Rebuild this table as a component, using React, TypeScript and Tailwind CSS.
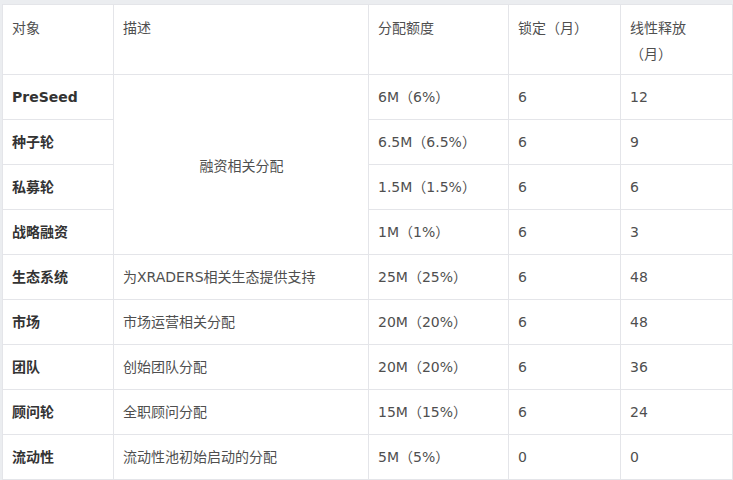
const rows = [
  { name: "PreSeed", amount: "6M（6%）", lock: "6", release: "12" },
  { name: "种子轮", amount: "6.5M（6.5%）", lock: "6", release: "9" },
  { name: "私募轮", amount: "1.5M（1.5%）", lock: "6", release: "6" },
  { name: "战略融资", amount: "1M（1%）", lock: "6", release: "3" },
  { name: "生态系统", desc: "为XRADERS相关生态提供支持", amount: "25M（25%）", lock: "6", release: "48" },
  { name: "市场", desc: "市场运营相关分配", amount: "20M（20%）", lock: "6", release: "48" },
  { name: "团队", desc: "创始团队分配", amount: "20M（20%）", lock: "6", release: "36" },
  { name: "顾问轮", desc: "全职顾问分配", amount: "15M（15%）", lock: "6", release: "24" },
  { name: "流动性", desc: "流动性池初始启动的分配", amount: "5M（5%）", lock: "0", release: "0" },
];

const font = "font-['DejaVu_Sans','Noto_Sans_CJK_SC',sans-serif]";
const cell = "border border-[#e4e5e9] pl-[9px] pr-2 align-middle";
const head = "border border-[#e4e5e9] pl-[9px] pr-2 pt-[10px] align-top font-normal text-left";

export default function App() {
  return (
    <div className={`h-[480px] w-[733px] overflow-hidden bg-[#ebedf0] pt-[4px] pl-[2px] ${font}`}>
      <table className="w-[730px] table-fixed border-collapse bg-white text-[14px] text-[#4f4f4f]">
        <colgroup>
          <col className="w-[111px]" />
          <col className="w-[255px]" />
          <col className="w-[140px]" />
          <col className="w-[112px]" />
          <col className="w-[112px]" />
        </colgroup>
        <thead>
          <tr className="h-[70px] leading-[26px]">
            <th className={head}>对象</th>
            <th className={head}>描述</th>
            <th className={head}>分配额度</th>
            <th className={head}>锁定（月）</th>
            <th className={head}>
              线性释放
              <br />
              （月）
            </th>
          </tr>
        </thead>
        <tbody>
          {rows.map((r, i) => (
            <tr key={r.name} className="h-[45px]">
              <td className={`${cell} font-bold text-[#333]`}>{r.name}</td>
              {i === 0 && (
                <td rowSpan={4} className={`${cell} pl-0 pr-0 pt-[3px] text-center`}>
                  融资相关分配
                </td>
              )}
              {r.desc && <td className={cell}>{r.desc}</td>}
              <td className={cell}>{r.amount}</td>
              <td className={cell}>{r.lock}</td>
              <td className={cell}>{r.release}</td>
            </tr>
          ))}
        </tbody>
      </table>
    </div>
  );
}
